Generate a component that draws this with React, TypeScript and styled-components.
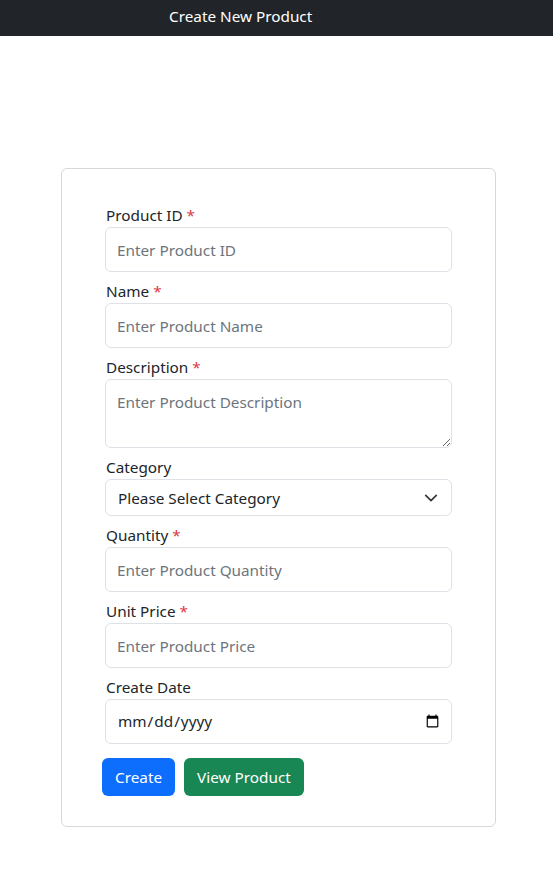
import React from 'react';
import styled, { createGlobalStyle } from 'styled-components';

const GlobalStyle = createGlobalStyle`
  body {
    margin: 0;
    background: #fff;
    color: #212529;
    font-family: 'Segoe UI', 'Noto Sans', 'Liberation Sans', sans-serif;
    font-size: 15.3px;
    line-height: 1.5;
  }
  * { box-sizing: border-box; }
`;

const fields = [
  { id: 'productId', label: 'Product ID', placeholder: 'Enter Product ID', required: true },
  { id: 'name', label: 'Name', placeholder: 'Enter Product Name', required: true },
];

const lowerFields = [
  { id: 'quantity', label: 'Quantity', placeholder: 'Enter Product Quantity', required: true },
  { id: 'price', label: 'Unit Price', placeholder: 'Enter Product Price', required: true },
];

export default function App() {
  return (
    <>
      <GlobalStyle />
      <Header>Create New Product</Header>
      <Page>
        <Card>
          <Form onSubmit={(e) => e.preventDefault()}>
            {fields.map((f) => (
              <Group key={f.id}>
                <Label htmlFor={f.id}>
                  {f.label} {f.required && <Star>*</Star>}
                </Label>
                <Input id={f.id} type="text" placeholder={f.placeholder} />
              </Group>
            ))}

            <Group>
              <Label htmlFor="description">
                Description <Star>*</Star>
              </Label>
              <TextArea id="description" placeholder="Enter Product Description" />
            </Group>

            <Group>
              <Label htmlFor="category">Category</Label>
              <SelectWrap>
                <Select id="category" defaultValue="">
                  <option value="">Please Select Category</option>
                  <option value="a">Electronics</option>
                  <option value="b">Clothing</option>
                </Select>
                <Chevron viewBox="0 0 16 16" width="16" height="16">
                  <path
                    d="M2 5l6 6 6-6"
                    fill="none"
                    stroke="#343a40"
                    strokeWidth="2"
                    strokeLinecap="round"
                    strokeLinejoin="round"
                  />
                </Chevron>
              </SelectWrap>
            </Group>

            {lowerFields.map((f) => (
              <Group key={f.id}>
                <Label htmlFor={f.id}>
                  {f.label} {f.required && <Star>*</Star>}
                </Label>
                <Input id={f.id} type="text" placeholder={f.placeholder} />
              </Group>
            ))}

            <Group>
              <Label htmlFor="createDate">Create Date</Label>
              <Input id="createDate" type="date" />
            </Group>

            <Actions>
              <Button type="submit" $variant="primary">Create</Button>
              <Button type="button" $variant="success">View Product</Button>
            </Actions>
          </Form>
        </Card>
      </Page>
    </>
  );
}

const Header = styled.header`
  height: 36px;
  background: #212529;
  color: #fff;
  font-size: 15.3px;
  line-height: 33px;
  padding-left: 169px;
`;

const Page = styled.main`
  padding: 132px 0 40px 61px;
`;

const Card = styled.div`
  width: 435px;
  border: 1px solid #d6d8db;
  border-radius: 6px;
  padding: 34px 43px 30px 43px;
`;

const Form = styled.form`
  display: flex;
  flex-direction: column;
  gap: 7px;
`;

const Group = styled.div`
  display: flex;
  flex-direction: column;
`;

const Label = styled.label`
  display: block;
  height: 24px;
  padding-left: 1px;
  line-height: 24px;
  color: #212529;
`;

const Star = styled.span`
  color: #dc3545;
`;

const fieldBase = `
  width: 100%;
  font-family: inherit;
  font-size: 15.3px;
  color: #212529;
  background: #fff;
  border: 1px solid #dee2e6;
  border-radius: 6px;
  outline: none;
  &::placeholder {
    color: #6c757d;
  }
`;

const Input = styled.input`
  ${fieldBase}
  height: 45px;
  padding: 0 11px;
  line-height: 1.5;
  &::-webkit-calendar-picker-indicator {
    margin-right: -2px;
  }
`;

const TextArea = styled.textarea`
  ${fieldBase}
  height: 69px;
  padding: 11px 11px;
  line-height: 1.5;
  resize: vertical;
`;

const SelectWrap = styled.div`
  position: relative;
`;

const Select = styled.select`
  ${fieldBase}
  height: 37px;
  padding: 0 36px 0 12px;
  appearance: none;
  -webkit-appearance: none;
`;

const Chevron = styled.svg`
  position: absolute;
  right: 14px;
  top: 12px;
  width: 14px;
  height: 14px;
  pointer-events: none;
`;

const Actions = styled.div`
  display: flex;
  gap: 9px;
  margin: 7px 0 0 -3px;
`;

const Button = styled.button<{ $variant: 'primary' | 'success' }>`
  height: 38px;
  padding: 0 12px;
  font-family: inherit;
  font-size: 15.3px;
  color: #fff;
  border: 1px solid transparent;
  border-radius: 6px;
  cursor: pointer;
  background: ${(p) => (p.$variant === 'primary' ? '#0d6efd' : '#198754')};
`;
